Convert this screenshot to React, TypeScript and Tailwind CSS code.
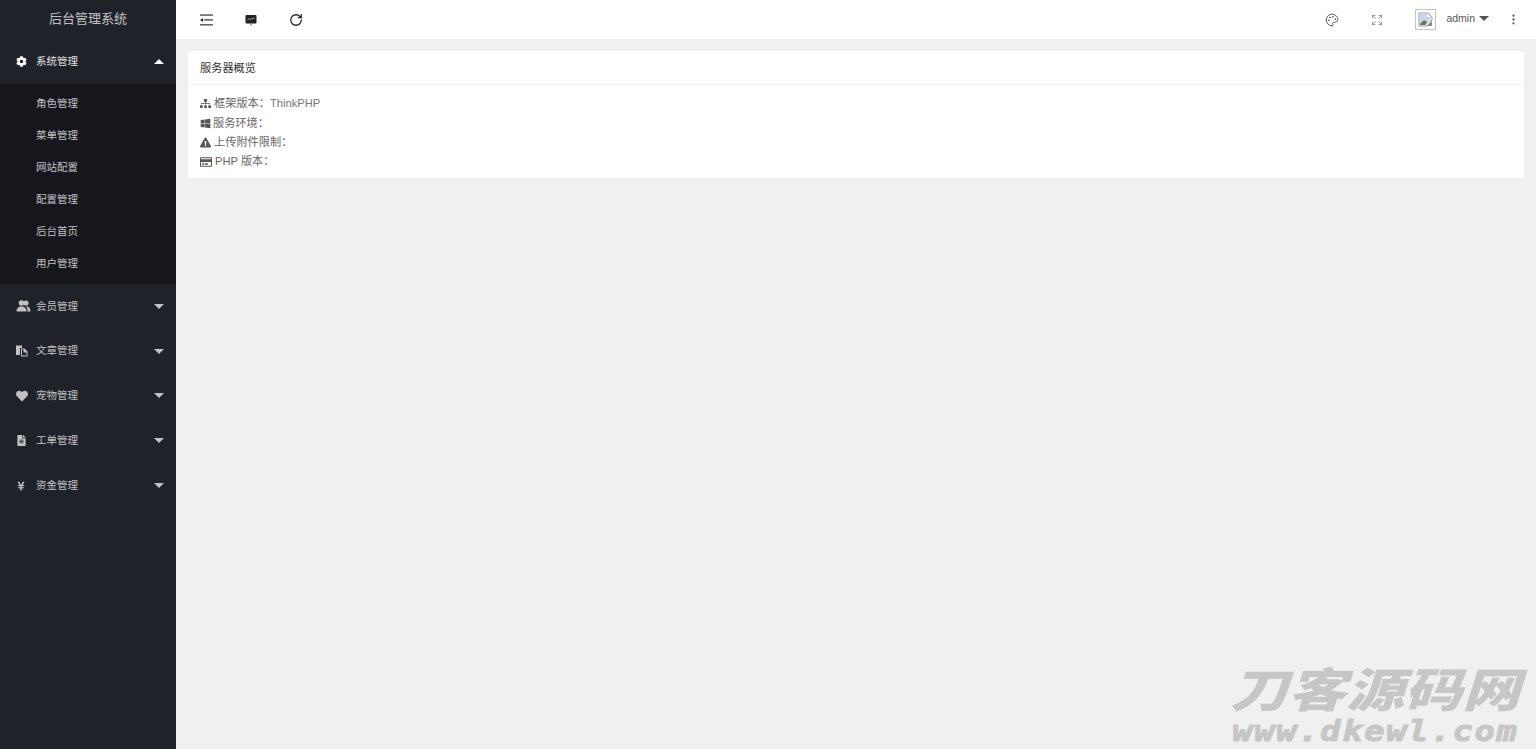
import React from "react";
import { FaCog, FaExclamationTriangle, FaFileAlt, FaHeart, FaRegCreditCard, FaSitemap, FaWindows, FaYenSign } from "react-icons/fa";
import { Expand, MoreVertical, Palette, RotateCw } from "lucide-react";

const font = "font-['Liberation_Sans','Noto_Sans_CJK_SC',sans-serif]";

const subItems = ["角色管理", "菜单管理", "网站配置", "配置管理", "后台首页", "用户管理"];

const PeopleIcon = () => (
  <svg width="15" height="12" viewBox="0 0 15 12" fill="currentColor">
    <circle cx="5.5" cy="3" r="2.8" />
    <path d="M0.5 11.5 C0.5 8 2.5 6.5 5.5 6.5 C8.5 6.5 10.5 8 10.5 11.5 Z" />
    <circle cx="10" cy="3" r="2.6" />
    <path d="M10 6.3 C12.7 6.3 14.5 8 14.5 11.5 H11.5 C11.5 9 11 7.5 10 6.3 Z" />
  </svg>
);

const PagesIcon = () => (
  <svg width="12" height="12" viewBox="0 0 12 12" fill="currentColor">
    <path d="M0 0.5 H6 V3 H4 V10 H0 Z" />
    <path d="M5 3.5 H8.5 L11.5 6.5 V11.5 H5 Z M6 4.5 V10.5 H10.5 V7.5 H7.5 V4.5 Z" fillRule="evenodd" />
  </svg>
);

const menus = [
  { label: "会员管理", icon: <PeopleIcon /> },
  { label: "文章管理", icon: <PagesIcon /> },
  { label: "宠物管理", icon: <FaHeart size={12} /> },
  { label: "工单管理", icon: <FaFileAlt size={11} /> },
  { label: "资金管理", icon: <FaYenSign size={10} /> },
];

const Caret: React.FC<{ up?: boolean }> = ({ up }) => (
  <span
    className={`ml-auto mr-3 h-0 w-0 border-x-[5px] border-x-transparent ${
      up ? "border-b-[5px] border-b-white" : "border-t-[5px] border-t-[#c2c2c4]"
    }`}
  />
);

const ShrinkIcon = () => (
  <svg width="13" height="12" viewBox="0 0 13 12" fill="#222">
    <rect x="0" y="0.5" width="13" height="1.1" />
    <rect x="4" y="5.4" width="9" height="1.1" />
    <rect x="0" y="10.3" width="13" height="1.1" />
    <path d="M0 6 L3 4.2 V7.8 Z" />
  </svg>
);

const MonitorIcon = () => (
  <svg width="12" height="12" viewBox="0 0 12 12">
    <rect x="0.5" y="1" width="11" height="8.5" rx="1" fill="#222" />
    <path d="M2.5 6 L4.5 4.5 L6 5.8 L8 3.8 L9.5 4.8" stroke="#cfd6dc" strokeWidth="0.8" fill="none" />
    <rect x="5.5" y="9.5" width="1" height="2" fill="#555" />
  </svg>
);

const BrokenImage = () => (
  <svg width="16" height="16" viewBox="0 0 16 16">
    <path d="M1 1 H10 L14 5 V8 L9 14 H1 Z" fill="#fff" stroke="#9a9a9a" strokeWidth="1" />
    <path d="M2 2 H9.5 V5 H13 V7 L9 12 H2 Z" fill="#c6d6ea" />
    <path d="M2 12 L6 8 L9 10 L7.5 13 H2 Z" fill="#5f7d4f" />
    <path d="M9 14 L14 9 V14 Z" fill="#8a8a8a" />
  </svg>
);

const Sidebar = () => (
  <aside className="flex w-[176px] shrink-0 flex-col bg-[#20222a] text-[10.5px]">
    <div className="flex h-[39px] items-center justify-center pb-[2px] text-[13px] text-[#c2c2c4]">后台管理系统</div>
    <div className="flex h-[45px] items-center text-white">
      <span className="flex w-[36px] pl-[16px]"><FaCog size={11} /></span>
      <span className="text-[#e3e3e4]">系统管理</span>
      <Caret up />
    </div>
    <div className="bg-[#16171d] py-[4px]">
      {subItems.map((item) => (
        <div key={item} className="flex h-[32px] items-center pl-[36px] text-[#c2c2c4]">{item}</div>
      ))}
    </div>
    {menus.map((m) => (
      <div key={m.label} className="flex h-[44.8px] items-center text-[#c2c2c4]">
        <span className="flex w-[36px] pl-[16px]">{m.icon}</span>
        <span>{m.label}</span>
        <Caret />
      </div>
    ))}
  </aside>
);

const TopBar = () => (
  <header className="flex h-[39px] items-center bg-white">
    <div className="flex items-center pl-[24px]">
      <ShrinkIcon />
      <span className="ml-[32px] flex"><MonitorIcon /></span>
      <RotateCw size={14} strokeWidth={2.2} className="ml-[32px] text-[#222]" />
    </div>
    <div className="ml-auto flex items-center text-[#555]">
      <Palette size={14} strokeWidth={1.6} />
      <Expand size={12} strokeWidth={1.4} className="ml-[32px] text-[#777]" />
      <span className="ml-[32px] flex h-[21px] w-[21px] items-center justify-center border border-[#c4c4c4]"><BrokenImage /></span>
      <span className="ml-[10px] -mt-[2px] text-[10.5px] text-[#555]">admin</span>
      <span className="ml-[4px] -mt-[2px] h-0 w-0 border-x-[5px] border-t-[5px] border-x-transparent border-t-[#555]" />
      <MoreVertical size={13} strokeWidth={2.2} className="ml-[18px] mr-[16px]" />
    </div>
  </header>
);

const rows = [
  { icon: <FaSitemap size={11} />, w: "w-[14px]", label: "框架版本：", value: "ThinkPHP" },
  { icon: <FaWindows size={11} />, w: "w-[13px]", label: "服务环境：", value: "" },
  { icon: <FaExclamationTriangle size={11} />, w: "w-[14px]", label: "上传附件限制：", value: "" },
  { icon: <FaRegCreditCard size={12} />, w: "w-[15px]", label: "PHP 版本：", value: "" },
];

const Card = () => (
  <section className="rounded-[2px] bg-white">
    <div className="flex h-[34px] items-center border-b border-[#f6f6f6] px-[12px] pt-[2px] text-[11.2px] text-[#333]">服务器概览</div>
    <div className="px-[12px] pt-[9px] pb-[8px] text-[11.2px] text-[#666]">
      {rows.map((r, i) => (
        <div key={r.label} className={`flex h-[19px] items-center ${i > 0 ? "pt-[2px]" : ""}`}>
          <span className={`flex shrink-0 text-[#555] ${r.w}`}>{r.icon}</span>
          <span>{r.label}</span>
          {r.value && <span className="text-[#777]">{r.value}</span>}
        </div>
      ))}
    </div>
  </section>
);

const Watermark = () => (
  <div className="pointer-events-none absolute right-[15px] bottom-[3px] flex w-[292px] flex-col items-center text-[#c6c6c6] select-none">
    <div className="h-[50px] scale-y-[0.8] text-[58px] leading-[50px] font-black whitespace-nowrap italic">刀客源码网</div>
    <div className="mt-[2px] h-[28px] scale-x-[1.2] font-['DejaVu_Sans_Mono',monospace] text-[28px] leading-[28px] font-bold tracking-[1.5px] whitespace-nowrap italic [-webkit-text-stroke:1px_#c6c6c6]">www.dkewl.com</div>
  </div>
);

export default function App() {
  return (
    <div className={`relative flex h-[749px] w-full overflow-hidden bg-[#f0f0f0] ${font}`}>
      <Sidebar />
      <main className="flex min-w-0 flex-1 flex-col">
        <TopBar />
        <div className="pt-[12px] pr-[12px] pl-[12px]">
          <Card />
        </div>
      </main>
      <Watermark />
    </div>
  );
}
